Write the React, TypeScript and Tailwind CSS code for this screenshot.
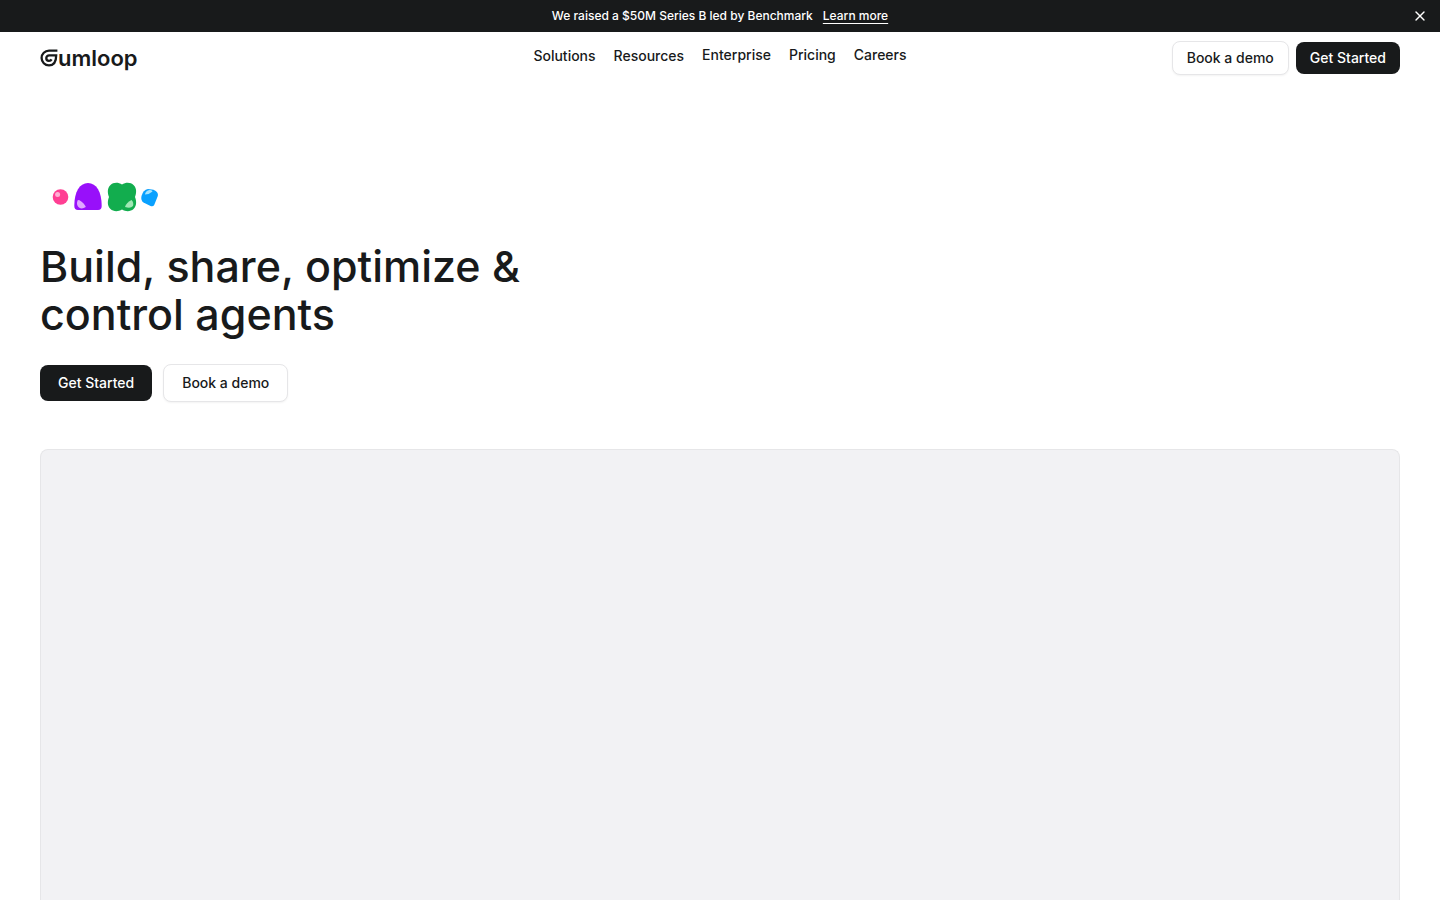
import { useState } from "react";
import { X } from "lucide-react";

const menus = ["Solutions", "Resources"];
const links = ["Enterprise", "Pricing", "Careers"];

function Logo() {
  return (
    <a href="#" aria-label="Gumloop" className="flex items-center text-[#181a1b]">
      <svg width="18" height="20" viewBox="0 0 18 20" fill="none" stroke="currentColor">
        <path
          d="M17.4 2.6H9A7.4 7.4 0 0 0 9 17.4C13.4 17.4 16.2 14 16.2 7.3H9.2A2.8 2.8 0 0 0 9 12.9Q10.8 12.9 11.600 11.400"
          strokeWidth="2.3"
        />
      </svg>
      <span className="text-[22px] leading-6 font-semibold">umloop</span>
    </a>
  );
}

function Shapes() {
  return (
    <svg width="120" height="36" viewBox="0 0 120 36" aria-hidden="true">
      <circle cx="20.5" cy="18" r="7.8" fill="#ff3f93" />
      <circle cx="17.6" cy="15.6" r="2.5" fill="#ffb0d4" />
      <path d="M34.3 27C34.3 13 39.5 4 48 4S61.7 13 61.7 27Q61.7 31 58 31H38Q34.3 31 34.3 27Z" fill="#9810fa" />
      <path d="M38.5 21C41 21.5 45 25.5 45.8 28Q42 30.5 39 28.5Q36 26 37.5 21.5Z" fill="#dfa8ff" />
      <path d="M82 5.5C86 3 91 3.5 93.5 6C97 9.5 96.5 14 95 18C96.5 22 97 26.5 93.5 30C91 32.5 86 33 82 30.5C78 33 73 32.5 70.5 30C67 26.5 67.5 22 69 18C67.5 14 67 9.5 70.5 6C73 3.5 78 3 82 5.5Z" fill="#12ad4e" />
      <path d="M91.5 21Q94 23.5 93 27Q90.5 30 85 28Q86 24 91.5 21Z" fill="#a0e8b5" />
      <path d="M108 10L113.5 10.8Q118.8 13 117.8 17L114.2 26Q113 28 110.5 27L103.5 23.5Q100.5 21 101.5 17Q103 11 108 10Z" fill="#0aa1ff" />
      <path d="M105 15.5Q105.5 11.5 109.5 11Q112.5 10.8 112.5 12.5Q110 15 105 15.5Z" fill="#a5e4ff" />
    </svg>
  );
}

const dark =
  "rounded-lg bg-[#181a1b] text-sm font-medium text-white hover:bg-[#2c2e30]";
const light =
  "rounded-lg border border-[#e6e6e8] bg-white text-sm font-medium text-[#181a1b] shadow-xs hover:bg-gray-50";

export default function App() {
  const [showBanner, setShowBanner] = useState(true);

  return (
    <div className="flex h-screen min-h-[640px] flex-col overflow-hidden bg-white font-['Inter',sans-serif] text-[#181a1b]">
      {/* ANNOUNCEMENT */}
      {showBanner && (
        <div className="grid h-8 shrink-0 grid-cols-[1fr_auto_1fr] items-center bg-[#181a1b] px-3 text-xs font-medium text-white">
          <p className="col-start-2 flex gap-2.5">
            We raised a $50M Series B led by Benchmark
            <a href="#" className="underline underline-offset-3">Learn more</a>
          </p>
          <button aria-label="Dismiss" className="justify-self-end" onClick={() => setShowBanner(false)}>
            <X size={16} />
          </button>
        </div>
      )}

      {/* HEADER */}
      <header className="grid h-[52px] shrink-0 grid-cols-[1fr_auto_1fr] items-center px-10">
        <Logo />
        <nav className="flex items-start gap-[18px] pb-1 text-sm font-medium">
          {menus.map((item) => (
            <button key={item} className="leading-6">{item}</button>
          ))}
          {links.map((item) => (
            <a key={item} href="#" className="leading-[22px]">{item}</a>
          ))}
        </nav>
        <div className="flex items-center gap-[7px] justify-self-end">
          <button className={light + " h-[34px] px-3.5"}>Book a demo</button>
          <button className={dark + " h-8 px-3.5"}>Get Started</button>
        </div>
      </header>

      {/* HERO */}
      <main className="flex flex-1 flex-col px-10 pt-[95px]">
        <Shapes />
        <h1 className="mt-[27px] text-[43px] leading-12 font-medium">
          Build, share, optimize &<br />
          control agents
        </h1>
        <div className="mt-[26px] flex items-center gap-[11px]">
          <button className={dark + " h-9 px-[18px]"}>Get Started</button>
          <button className={light + " h-[38px] px-[18px]"}>Book a demo</button>
        </div>
        <div className="mt-[47px] flex-1 rounded-t-lg border border-b-0 border-[#e6e6e8] bg-[#f2f2f4]" />
      </main>
    </div>
  );
}
